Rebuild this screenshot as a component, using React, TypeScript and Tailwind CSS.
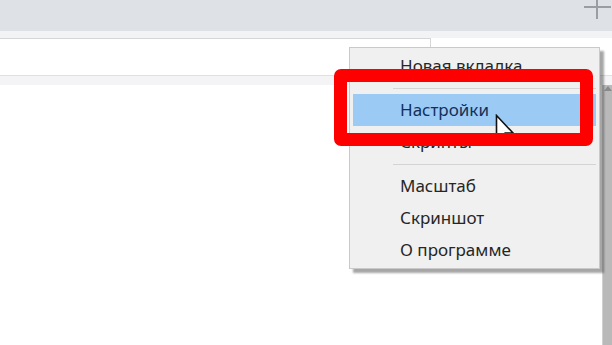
import React from "react";

function MenuItem({ label, active }: { label: string; active?: boolean }) {
  return (
    <div
      className={
        "h-[32px] flex items-center pl-[47px] text-[17px] " +
        (active ? "bg-[#9bcaf4] text-[#13305a]" : "text-[#262626]")
      }
    >
      {label}
    </div>
  );
}

function Separator() {
  return (
    <div className="h-[12px] flex items-center pl-[40px] pr-[0px]">
      <div className="h-px w-full bg-[#d4d4d4]" />
    </div>
  );
}

export default function App() {
  return (
    <div
      className="relative w-[612px] h-[345px] overflow-hidden bg-white flex flex-col"
      style={{ fontFamily: '"Noto Sans", "Open Sans", Arial, sans-serif' }}
    >
      {/* top tab bar */}
      <div className="h-[31px] bg-[#dee1e6] flex justify-end shrink-0">
        <div className="relative w-[28px] h-[31px] mr-[0px]">
          <div className="absolute left-[0px] top-[6px] w-[27px] h-[2px] bg-[#9a9da2]" />
          <div className="absolute left-[12px] top-[-6px] w-[2px] h-[25px] bg-[#9a9da2]" />
        </div>
      </div>
      {/* light strip */}
      <div className="h-[7px] bg-[#f2f3f5] shrink-0" />
      {/* address row */}
      <div className="h-[37px] flex shrink-0 bg-white">
        <div className="w-[431px] border-t border-r border-[#d6d6d6] bg-white" />
        <div className="flex-1 bg-white" />
      </div>
      <div className="h-px bg-[#e0e0e0] shrink-0" />
      <div className="h-[9px] bg-[#f4f4f6] shrink-0" />
      {/* content */}
      <div className="flex-1 flex">
        <div className="flex-1 bg-white" />
        <div className="w-[10px] bg-[#b9b9b9] border-l border-[#d0d0d0]" />
      </div>

      {/* scroll arrow */}
      <div className="absolute left-[604px] top-[86px] w-0 h-0 border-l-[4px] border-r-[4px] border-b-[5px] border-l-transparent border-r-transparent border-b-[#8a8a8a]" />

      {/* context menu */}
      <div className="absolute left-[349px] top-[47px] w-[251px] bg-[#f0f0f0] border border-[#c9c9c9] shadow-[4px_4px_2px_rgba(0,0,0,0.35)] pt-[2px] pb-[2px] px-[3px]">
        <MenuItem label="Новая вкладка" />
        <Separator />
        <MenuItem label="Настройки" active />
        <MenuItem label="Скрипты" />
        <Separator />
        <MenuItem label="Масштаб" />
        <MenuItem label="Скриншот" />
        <MenuItem label="О программе" />
      </div>

      {/* cursor */}
      <svg
        className="absolute left-[495px] top-[114px]"
        width="22"
        height="32"
        viewBox="0 0 22 32"
      >
        <path
          d="M1.5 1.5 L1.5 26 L7 20.5 L11 29 L14.5 27.5 L10.5 19 L18 19 Z"
          fill="#ffffff"
          stroke="#111111"
          strokeWidth="1.6"
          strokeLinejoin="miter"
        />
      </svg>

      {/* red highlight frame */}
      <div className="absolute left-[334px] top-[69px] w-[259px] h-[77px] border-[13px] border-[#ff0000] rounded-[7px]" />
    </div>
  );
}
